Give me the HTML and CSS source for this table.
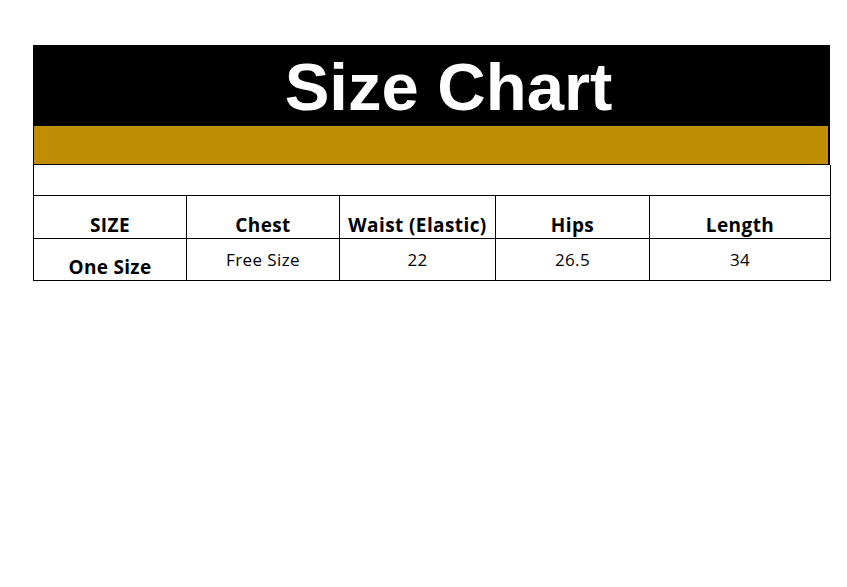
FILE: index.html
```html
<!DOCTYPE html>
<html>
<head>
<meta charset="utf-8">
<link rel="stylesheet" href="styles.css">
</head>
<body>
<div class="chart">
  <div class="title-bar"><span class="title">Size Chart</span></div>
  <div class="gold-band"></div>
  <table class="sizes">
    <colgroup>
      <col class="c1"><col class="c2"><col class="c3"><col class="c4"><col class="c5">
    </colgroup>
    <tr class="blank-row"><td colspan="5"></td></tr>
    <tr class="head-row">
      <th>SIZE</th><th>Chest</th><th>Waist (Elastic)</th><th>Hips</th><th>Length</th>
    </tr>
    <tr class="data-row">
      <td class="size-name">One Size</td><td>Free Size</td><td>22</td><td>26.5</td><td>34</td>
    </tr>
  </table>
</div>
</body>
</html>
```
FILE: styles.css
```css
html, body {
  margin: 0;
  padding: 0;
  background: #ffffff;
}
.chart {
  margin: 45px 0 0 33px;
  width: 797px;
}
.title-bar {
  background: #000000;
  height: 81px;
  display: flex;
  align-items: center;
  justify-content: center;
  padding-left: 34px;
  box-sizing: border-box;
}
.title {
  font-family: "Liberation Sans", Arial, sans-serif;
  font-weight: bold;
  font-size: 67px;
  color: #ffffff;
  line-height: 1;
  margin-top: 2px;
}
.gold-band {
  height: 39px;
  background: #bf8e04;
  border-left: 1px solid #000;
  border-right: 2px solid #000;
  border-bottom: 1px solid #000;
  box-sizing: border-box;
}
.sizes {
  width: 797px;
  border-collapse: collapse;
  table-layout: fixed;
  font-family: "Open Sans", "Noto Sans", sans-serif;
  color: #000;
}
.c1 { width: 153px; }
.c2 { width: 153px; }
.c3 { width: 156px; }
.c4 { width: 154px; }
.c5 { width: 181px; }
.sizes td, .sizes th {
  border: 1px solid #000;
  padding: 0;
  text-align: center;
}
.blank-row td {
  height: 30px;
  border-top: none;
}
.head-row th {
  height: 41px;
  vertical-align: bottom;
  font-weight: bold;
  font-size: 19px;
  letter-spacing: 0.4px;
  padding-bottom: 1px;
  line-height: 24px;
}
.data-row td {
  height: 40px;
  vertical-align: middle;
  font-size: 17px;
  letter-spacing: 0.4px;
  line-height: 22px;
  padding-top: 1px;
  padding-bottom: 0;
}
.data-row td.size-name {
  vertical-align: bottom;
  font-weight: bold;
  font-size: 19px;
  letter-spacing: 0.3px;
  padding-top: 0;
  padding-bottom: 1px;
  line-height: 24px;
}
```
